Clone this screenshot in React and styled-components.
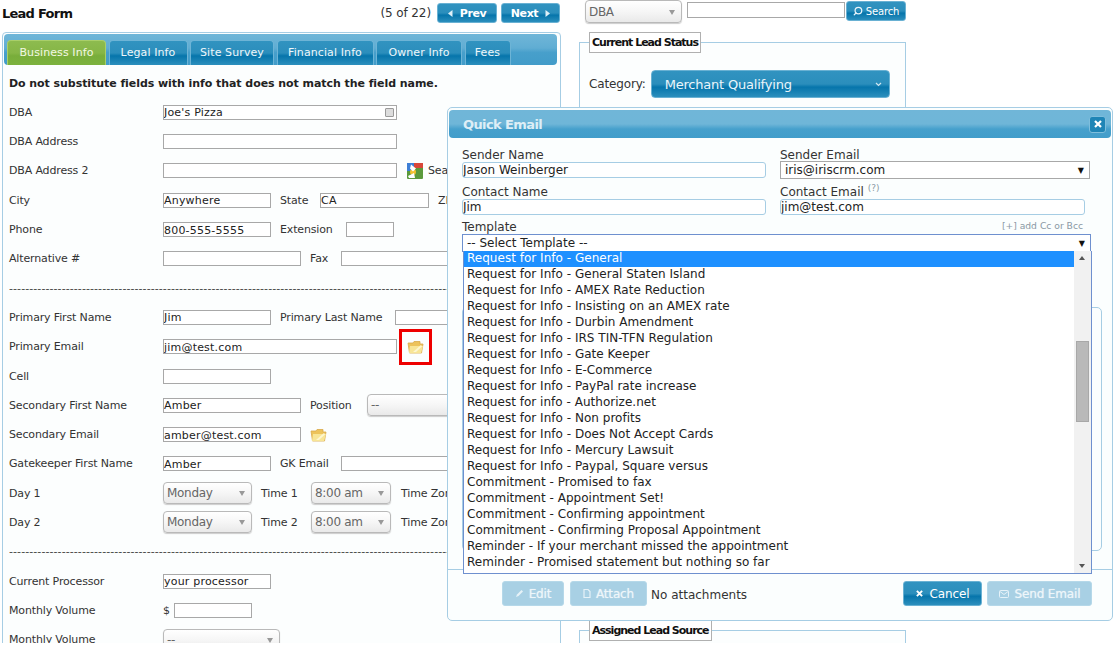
import styled, { createGlobalStyle } from 'styled-components'
import { Search } from 'lucide-react'

const GlobalStyle = createGlobalStyle`
    html, body {
        margin: 0;
        background: #fff;
    }
    * {
        box-sizing: border-box;
    }
`

const Page = styled.div`
    position: relative;
    display: flex;
    align-items: flex-start;
    width: 1117px;
    height: 643px;
    overflow: hidden;
    background: #fff;
    color: #333;
    font-family: "DejaVu Sans", sans-serif;
    font-size: 11px;
    letter-spacing: -0.15px;
`

const LeftColumn = styled.div`
    width: 559px;
    margin-left: 2px;
    flex-shrink: 0;
`

const Header = styled.div`
    display: flex;
    align-items: center;
    height: 32px;
    padding: 0 1px 6px 0;
`

const Title = styled.h1`
    flex: 1;
    margin: 0;
    font-size: 13px;
    font-weight: 700;
    color: #111;
    letter-spacing: -0.75px;
`

const Counter = styled.span`
    margin-right: 6px;
    font-size: 12px;
    letter-spacing: -0.1px;
`

const blueGradient = `linear-gradient(#3193c0 0%, #2b8ebc 50%, #0675ab 62%, #2c8fbd 100%)`

const Button = styled.button`
    display: inline-flex;
    align-items: center;
    justify-content: center;
    gap: ${p => p.$gap || 7}px;
    width: ${p => p.$w}px;
    height: ${p => p.$h || 20}px;
    margin-left: ${p => p.$ml || 0}px;
    margin-top: ${p => p.$mt || 0}px;
    padding: 0;
    border: 1px solid ${p => p.$off ? '#b5d8e9' : '#69b1d3'};
    border-radius: 3px;
    background: ${p => p.$off ? '#a8d0e4' : blueGradient};
    color: ${p => p.$off ? '#eef6fa' : '#fff'};
    font-family: inherit;
    font-size: ${p => p.$fs || 11}px;
    font-weight: ${p => p.$bold ? 700 : 400};
    letter-spacing: ${p => p.$ls || '-0.15px'};
    text-shadow: ${p => p.$off ? '0 0 1px rgba(255, 255, 255, 0.6)' : 'none'};
`

const Panel = styled.div`
    height: 640px;
    padding: 1px;
    border: 1px solid #a6cde4;
    border-radius: 4px 4px 0 0;
    background: #fcfefe;
`

const TabBar = styled.div`
    display: flex;
    align-items: flex-end;
    gap: 2.5px;
    width: 553px;
    height: 31px;
    padding-left: 3px;
    border-radius: 4px;
    background: linear-gradient(#70b6d8 0%, #60add3 45%, #479fcb 60%, #429cc9 100%);
`

const Tab = styled.div`
    display: flex;
    align-items: center;
    justify-content: center;
    width: ${p => p.$w}px;
    height: 25px;
    padding-bottom: 2px;
    border: 1px solid ${p => p.$active ? '#a9cf6a' : '#6db4d6'};
    border-bottom: 0;
    border-radius: 4px 4px 0 0;
    background: ${p => p.$active
        ? 'linear-gradient(#8dbb4f 0%, #86b646 50%, #78ad3a 62%, #7cb23e 100%)'
        : blueGradient};
    color: ${p => p.$active ? '#f2f8e4' : '#eef7fb'};
    letter-spacing: 0.1px;
`

const Warning = styled.p`
    margin: 12px 0 6.7px 5px;
    height: 14px;
    line-height: 14px;
    font-weight: 700;
    color: #222;
    letter-spacing: -0.06px;
    white-space: nowrap;
`

const Row = styled.div`
    display: flex;
    align-items: center;
    height: 29.3px;
    padding-left: 5px;
    white-space: nowrap;
    overflow: hidden;
`

const RowLabel = styled.span`
    width: 154px;
    flex-shrink: 0;
`

const InlineLabel = styled.span`
    flex-shrink: 0;
    width: ${p => p.$w}px;
    margin-left: ${p => p.$ml ?? 9}px;
`

const Field = styled.input`
    flex-shrink: 0;
    width: ${p => p.$w}px;
    height: 15px;
    margin-left: ${p => p.$ml || 0}px;
    padding: 1px 0 0;
    border: 1px solid #a8a8a8;
    background: #fff;
    color: #222;
    font-family: inherit;
    font-size: 11px;
    letter-spacing: 0.2px;
    outline: none;
`

const FieldWrap = styled.div`
    position: relative;
    flex-shrink: 0;
`

const LockBadge = styled.span`
    position: absolute;
    top: 3px;
    right: 3px;
    width: 9px;
    height: 9px;
    border: 1px solid #9a9a9a;
    border-radius: 1px;
    background: #ddd;
`

const Dropdown = styled.div`
    position: relative;
    display: flex;
    align-items: center;
    flex-shrink: 0;
    width: ${p => p.$w}px;
    height: ${p => p.$h || 22}px;
    padding-left: 3px;
    border: 1px solid #b9b9b9;
    border-radius: 4px;
    background: linear-gradient(#fff 0%, #f6f6f6 50%, #e9e9e9 100%);
    box-shadow: 0 1px 1px #ccc;
    color: #666;
    font-size: 12px;
    letter-spacing: -0.3px;
    &::after {
        content: "";
        position: absolute;
        right: 6px;
        top: 50%;
        margin-top: -2px;
        border: 3.5px solid transparent;
        border-top: 5px solid #999;
        border-bottom: 0;
    }
`

const Dashes = styled.div`
    overflow: hidden;
    white-space: nowrap;
    color: #444;
    font-size: 11px;
    letter-spacing: 0.08px;
`

const IconSlot = styled.span`
    display: inline-flex;
    margin-left: ${p => p.$ml || 0}px;
    flex-shrink: 0;
`

const Highlight = styled.span`
    position: absolute;
    left: 399px;
    top: 329px;
    width: 33px;
    height: 36px;
    border: 3px solid #ee0000;
    display: flex;
    align-items: center;
    justify-content: center;
`

const RightColumn = styled.div`
    width: 327px;
    margin-left: 18px;
    flex-shrink: 0;
`

const SearchBar = styled.div`
    display: flex;
    align-items: flex-start;
    height: 30px;
    padding-left: 6px;
`

const SearchInput = styled(Field)`
    height: 16px;
    margin: 2px 0 0 5px;
`

const Group = styled.fieldset`
    height: ${p => p.$h}px;
    margin: 2px 0 ${p => p.$mb || 0}px;
    padding: 0 9px;
    border: 1px solid #a6cde4;
    background: #fcfefe;
`

const GroupTitle = styled.legend`
    height: 21px;
    margin-left: 0;
    padding: 0 2px;
    border: 1px solid #b0b0b0;
    background: #fff;
    color: #111;
    font-weight: 700;
    line-height: 20px;
    letter-spacing: -1px;
`

const CategoryRow = styled.div`
    display: flex;
    align-items: center;
    gap: 5px;
    margin-top: 17px;
    font-size: 12px;
`

const CategorySelect = styled.div`
    display: flex;
    align-items: center;
    justify-content: space-between;
    width: 239px;
    height: 28px;
    padding: 0 7px 0 13px;
    border: 1px solid #69b1d3;
    border-radius: 4px;
    background: ${blueGradient};
    color: #eaf5fa;
    font-size: 13px;
    letter-spacing: -0.2px;
`

const Modal = styled.div`
    position: absolute;
    left: 447px;
    top: 107px;
    width: 666px;
    height: 514px;
    padding: 2px 1px;
    border: 1px solid #a6cde4;
    border-radius: 5px;
    background: #fbfefe;
    font-size: 12px;
    letter-spacing: 0;
`

const ModalBar = styled.div`
    display: flex;
    align-items: center;
    justify-content: space-between;
    height: 28px;
    padding: 0 5px 0 14px;
    border-radius: 4px;
    background: linear-gradient(#70b6d8 0%, #6fb6d8 50%, #46a0cc 68%, #429dca 100%);
`

const ModalTitle = styled.span`
    color: #ddeef6;
    font-size: 13px;
    font-weight: 700;
    letter-spacing: -0.6px;
`

const CloseButton = styled.span`
    display: flex;
    align-items: center;
    justify-content: center;
    width: 17px;
    height: 17px;
    border: 1px solid #7fbedc;
    border-radius: 3px;
    background: #1f85b6;
`

const ModalBody = styled.div`
    position: relative;
    height: 431px;
    padding: 11px 0 0 13px;
`

const FormGrid = styled.div`
    display: grid;
    grid-template-columns: 304px 310px;
    column-gap: 14px;
    row-gap: 7px;
`

const FormCell = styled.div`
    display: flex;
    flex-direction: column;
`

const FormLabel = styled.label`
    height: 13px;
    line-height: 13px;
    color: #333;
    white-space: nowrap;
`

const HelpMark = styled.sup`
    margin-left: 4px;
    color: #8a9aa5;
    font-size: 9px;
    line-height: 0;
`

const RoundField = styled.input`
    width: ${p => p.$w || '304px'};
    height: 16px;
    padding: 0;
    border: 1px solid #a6cde4;
    border-radius: 3px;
    background: #fff;
    color: #222;
    font-family: inherit;
    font-size: 12px;
    outline: none;
`

const PlainSelect = styled.div`
    position: relative;
    display: flex;
    align-items: center;
    justify-content: space-between;
    width: ${p => p.$w}px;
    height: 18px;
    margin-top: ${p => p.$mt || 0}px;
    padding: 0 5px 0 4px;
    border: 1px solid ${p => p.$open ? '#6e90cf' : '#a8a8a8'};
    background: #fff;
    color: #222;
    white-space: nowrap;
`

const SelectArrow = styled.span`
    color: #111;
    font-size: 8px;
`

const TemplateHead = styled.div`
    display: flex;
    justify-content: space-between;
    width: 621px;
    margin-top: 6px;
`

const AddCc = styled.span`
    margin-top: -1px;
    color: #8a98a4;
    font-size: 9.2px;
`

const MessageBox = styled.div`
    width: 640px;
    height: 244px;
    margin-top: 55px;
    border: 1px solid #a6cde4;
    border-radius: 5px;
`

const OptionList = styled.div`
    position: absolute;
    left: 14px;
    top: 113px;
    display: flex;
    width: 629px;
    height: 323px;
    border: 1px solid #6e90cf;
    border-top: 0;
    background: #fff;
`

const Options = styled.div`
    flex: 1;
    overflow: hidden;
`

const Option = styled.div`
    height: 16px;
    padding-left: 3px;
    line-height: 15px;
    background: ${p => p.$selected ? '#1e90ff' : 'transparent'};
    color: ${p => p.$selected ? '#fff' : '#222'};
    letter-spacing: 0.02px;
    white-space: nowrap;
`

const Scrollbar = styled.div`
    position: relative;
    width: 17px;
    background: #f1f1f1;
`

const ScrollThumb = styled.div`
    position: absolute;
    left: 2px;
    top: 90px;
    width: 13px;
    height: 81px;
    border: 1px solid #a8a8a8;
    background: #b9b9b9;
`

const ScrollArrow = styled.span`
    position: absolute;
    left: 5px;
    ${p => p.$down ? 'bottom: 5px;' : 'top: 5px;'}
    border: 3.5px solid transparent;
    ${p => p.$down ? 'border-top: 4px solid #555; border-bottom: 0;' : 'border-bottom: 4px solid #555; border-top: 0;'}
`

const ModalFooter = styled.div`
    display: flex;
    align-items: center;
    height: 51px;
    margin: 0 -1px;
    padding: 0 20px 3px 54px;
    border-top: 1px solid #a6cde4;
`

const Attachments = styled.span`
    flex: 1;
    margin: 3px 0 0 4px;
    color: #333;
`

const FlippedSearch = styled(Search)`
    transform: scaleX(-1);
`

const FolderIcon = () => (
    <svg width="17" height="14" viewBox="0 0 17 14">
        <path d="M1 3h5l1-1.500h6v2.500H16l-1.500 9H2.500z" fill="#edc35b" stroke="#d9a94a" strokeWidth="0.8" />
        <path d="M3 6h13l-2 7H2z" fill="#f8e596" />
        <path d="M6 12l8-7 1 1.500-6 5.500z" fill="#fdf6d0" />
    </svg>
)

const GoogleIcon = () => (
    <svg width="16" height="16" viewBox="0 0 16 16">
        <rect width="16" height="16" rx="1" fill="#5b9a3c" />
        <rect width="7" height="8" fill="#3d7fd6" />
        <rect x="7" width="9" height="5" fill="#d8473a" />
        <circle cx="6" cy="9" r="3" fill="#f2c230" />
        <path d="M4 1.500l5 4-3 3-3-3z" fill="#fff" />
        <path d="M1 13l6-3 1 5H2z" fill="#fff" />
    </svg>
)

const Caret = ({ dir }) => (
    <svg width="5" height="7" viewBox="0 0 5 7">
        <path d={dir === 'left' ? 'M4.500 0v7L0 3.500z' : 'M.5 0v7L5 3.500z'} fill="#dff0f8" />
    </svg>
)

const CrossIcon = ({ size = 7, color = '#fff' }) => (
    <svg width={size} height={size} viewBox="0 0 8 8">
        <path d="M1 1l6 6M7 1L1 7" stroke={color} strokeWidth="2.200" />
    </svg>
)

const PencilIcon = () => (
    <svg width="9" height="9" viewBox="0 0 9 9">
        <path d="M1 8l1-2.500L6.500 1 8 2.500 3.500 7z" fill="#e6f2f8" />
    </svg>
)

const FileIcon = () => (
    <svg width="8" height="9" viewBox="0 0 8 9">
        <path d="M1 .5h4l2 2v6H1z" fill="none" stroke="#e6f2f8" strokeWidth="1.200" />
    </svg>
)

const MailIcon = () => (
    <svg width="10" height="8" viewBox="0 0 10 8">
        <rect x=".5" y=".5" width="9" height="7" rx="1" fill="none" stroke="#e6f2f8" />
        <path d="M1 1.500l4 3 4-3" fill="none" stroke="#e6f2f8" />
    </svg>
)

const Chevron = () => (
    <svg width="7" height="5" viewBox="0 0 7 5">
        <path d="M1 1l2.500 2.500L6 1" fill="none" stroke="#cfe6f1" strokeWidth="1.200" />
    </svg>
)

const tabs = [
    { name: 'Business Info', w: 99, active: true },
    { name: 'Legal Info', w: 79 },
    { name: 'Site Survey', w: 84 },
    { name: 'Financial Info', w: 97 },
    { name: 'Owner Info', w: 86 },
    { name: 'Fees', w: 46 },
]

const templates = [
    'Request for Info - General',
    'Request for Info - General Staten Island',
    'Request for Info - AMEX Rate Reduction',
    'Request for Info - Insisting on an AMEX rate',
    'Request for Info - Durbin Amendment',
    'Request for Info - IRS TIN-TFN Regulation',
    'Request for Info - Gate Keeper',
    'Request for Info - E-Commerce',
    'Request for Info - PayPal rate increase',
    'Request for info - Authorize.net',
    'Request for Info - Non profits',
    'Request for Info - Does Not Accept Cards',
    'Request for Info - Mercury Lawsuit',
    'Request for Info - Paypal, Square versus',
    'Commitment - Promised to fax',
    'Commitment - Appointment Set!',
    'Commitment - Confirming appointment',
    'Commitment - Confirming Proposal Appointment',
    'Reminder - If your merchant missed the appointment',
    'Reminder - Promised statement but nothing so far',
]

const App = () => {
    return (
        <Page>
            <GlobalStyle />
            <LeftColumn>
                <Header>
                    <Title>Lead Form</Title>
                    <Counter>(5 of 22)</Counter>
                    <Button $w={60} $bold $ls="-0.4px"><Caret dir="left" /> Prev</Button>
                    <Button $w={59} $ml={4} $bold $ls="-0.4px">Next <Caret dir="right" /></Button>
                </Header>
                <Panel>
                    <TabBar>
                        {tabs.map(t => (
                            <Tab key={t.name} $w={t.w} $active={t.active}>{t.name}</Tab>
                        ))}
                    </TabBar>
                    <Warning>Do not substitute fields with info that does not match the field name.</Warning>

                    <Row>
                        <RowLabel>DBA</RowLabel>
                        <FieldWrap>
                            <Field $w={234} defaultValue="Joe's Pizza" />
                            <LockBadge />
                        </FieldWrap>
                    </Row>
                    <Row><RowLabel>DBA Address</RowLabel><Field $w={234} /></Row>
                    <Row>
                        <RowLabel>DBA Address 2</RowLabel>
                        <Field $w={234} />
                        <IconSlot $ml={10}><GoogleIcon /></IconSlot>
                        <InlineLabel $w={40} $ml={5}>Search</InlineLabel>
                    </Row>
                    <Row>
                        <RowLabel>City</RowLabel>
                        <Field $w={108} defaultValue="Anywhere" />
                        <InlineLabel $w={40}>State</InlineLabel>
                        <Field $w={109} defaultValue="CA" />
                        <InlineLabel $w={20}>ZIP</InlineLabel>
                    </Row>
                    <Row>
                        <RowLabel>Phone</RowLabel>
                        <Field $w={108} defaultValue="800-555-5555" />
                        <InlineLabel $w={66}>Extension</InlineLabel>
                        <Field $w={48} />
                    </Row>
                    <Row>
                        <RowLabel>Alternative #</RowLabel>
                        <Field $w={138} />
                        <InlineLabel $w={31}>Fax</InlineLabel>
                        <Field $w={140} />
                    </Row>
                    <Row><Dashes>{'-'.repeat(120)}</Dashes></Row>
                    <Row>
                        <RowLabel>Primary First Name</RowLabel>
                        <Field $w={108} defaultValue="Jim" />
                        <InlineLabel $w={115}>Primary Last Name</InlineLabel>
                        <Field $w={80} />
                    </Row>
                    <Row>
                        <RowLabel>Primary Email</RowLabel>
                        <Field $w={234} defaultValue="jim@test.com" />
                    </Row>
                    <Row><RowLabel>Cell</RowLabel><Field $w={108} /></Row>
                    <Row>
                        <RowLabel>Secondary First Name</RowLabel>
                        <Field $w={138} defaultValue="Amber" />
                        <InlineLabel $w={57}>Position</InlineLabel>
                        <Dropdown $w={100}>--</Dropdown>
                    </Row>
                    <Row>
                        <RowLabel>Secondary Email</RowLabel>
                        <Field $w={138} defaultValue="amber@test.com" />
                        <IconSlot $ml={9}><FolderIcon /></IconSlot>
                    </Row>
                    <Row>
                        <RowLabel>Gatekeeper First Name</RowLabel>
                        <Field $w={108} defaultValue="Amber" />
                        <InlineLabel $w={61}>GK Email</InlineLabel>
                        <Field $w={120} />
                    </Row>
                    <Row>
                        <RowLabel>Day 1</RowLabel>
                        <Dropdown $w={89}>Monday</Dropdown>
                        <InlineLabel $w={50}>Time 1</InlineLabel>
                        <Dropdown $w={80}>8:00 am</Dropdown>
                        <InlineLabel $w={60} $ml={10}>Time Zone</InlineLabel>
                    </Row>
                    <Row>
                        <RowLabel>Day 2</RowLabel>
                        <Dropdown $w={89}>Monday</Dropdown>
                        <InlineLabel $w={50}>Time 2</InlineLabel>
                        <Dropdown $w={80}>8:00 am</Dropdown>
                        <InlineLabel $w={60} $ml={10}>Time Zone</InlineLabel>
                    </Row>
                    <Row><Dashes>{'-'.repeat(120)}</Dashes></Row>
                    <Row><RowLabel>Current Processor</RowLabel><Field $w={108} defaultValue="your processor" /></Row>
                    <Row>
                        <RowLabel>Monthly Volume</RowLabel>
                        <span>$</span>
                        <Field $w={78} $ml={4} />
                    </Row>
                    <Row>
                        <RowLabel>Monthly Volume</RowLabel>
                        <Dropdown $w={117}>--</Dropdown>
                    </Row>
                </Panel>
            </LeftColumn>

            <RightColumn>
                <SearchBar>
                    <Dropdown $w={97} $h={23}>DBA</Dropdown>
                    <SearchInput $w={158} />
                    <Button $w={60} $ml={1} $mt={1} $h={20} $gap={3} $fs={10}>
                        <FlippedSearch size={10} strokeWidth={3} color="#e8f4fa" />
                        Search
                    </Button>
                </SearchBar>
                <Group $h={579} $mb={9}>
                    <GroupTitle>Current Lead Status</GroupTitle>
                    <CategoryRow>
                        Category:
                        <CategorySelect>Merchant Qualifying <Chevron /></CategorySelect>
                    </CategoryRow>
                </Group>
                <Group $h={60}>
                    <GroupTitle>Assigned Lead Source</GroupTitle>
                </Group>
            </RightColumn>

            <Highlight><FolderIcon /></Highlight>

            <Modal>
                <ModalBar>
                    <ModalTitle>Quick Email</ModalTitle>
                    <CloseButton><CrossIcon size={8} /></CloseButton>
                </ModalBar>
                <ModalBody>
                    <FormGrid>
                        <FormCell>
                            <FormLabel>Sender Name</FormLabel>
                            <RoundField defaultValue="Jason Weinberger" />
                        </FormCell>
                        <FormCell>
                            <FormLabel>Sender Email</FormLabel>
                            <PlainSelect $w={310} $mt={-1}>iris@iriscrm.com <SelectArrow>▼</SelectArrow></PlainSelect>
                        </FormCell>
                        <FormCell>
                            <FormLabel>Contact Name</FormLabel>
                            <RoundField defaultValue="Jim" />
                        </FormCell>
                        <FormCell>
                            <FormLabel>Contact Email<HelpMark>(?)</HelpMark></FormLabel>
                            <RoundField $w="305px" defaultValue="jim@test.com" />
                        </FormCell>
                    </FormGrid>
                    <TemplateHead>
                        <FormLabel>Template</FormLabel>
                        <AddCc>[+] add Cc or Bcc</AddCc>
                    </TemplateHead>
                    <PlainSelect $w={629} $open>-- Select Template -- <SelectArrow>▼</SelectArrow></PlainSelect>
                    <MessageBox />
                    <OptionList>
                        <Options>
                            {templates.map((t, i) => (
                                <Option key={t} $selected={i === 0}>{t}</Option>
                            ))}
                        </Options>
                        <Scrollbar>
                            <ScrollArrow />
                            <ScrollThumb />
                            <ScrollArrow $down />
                        </Scrollbar>
                    </OptionList>
                </ModalBody>
                <ModalFooter>
                    <Button $w={62} $h={25} $off $fs={12} $gap={5}><PencilIcon /> Edit</Button>
                    <Button $w={77} $h={25} $ml={6} $off $fs={12} $gap={5}><FileIcon /> Attach</Button>
                    <Attachments>No attachments</Attachments>
                    <Button $w={79} $h={25} $fs={12} $gap={7}><CrossIcon /> Cancel</Button>
                    <Button $w={105} $h={25} $ml={5} $off $fs={12} $gap={6}><MailIcon /> Send Email</Button>
                </ModalFooter>
            </Modal>
        </Page>
    )
}

export default App
